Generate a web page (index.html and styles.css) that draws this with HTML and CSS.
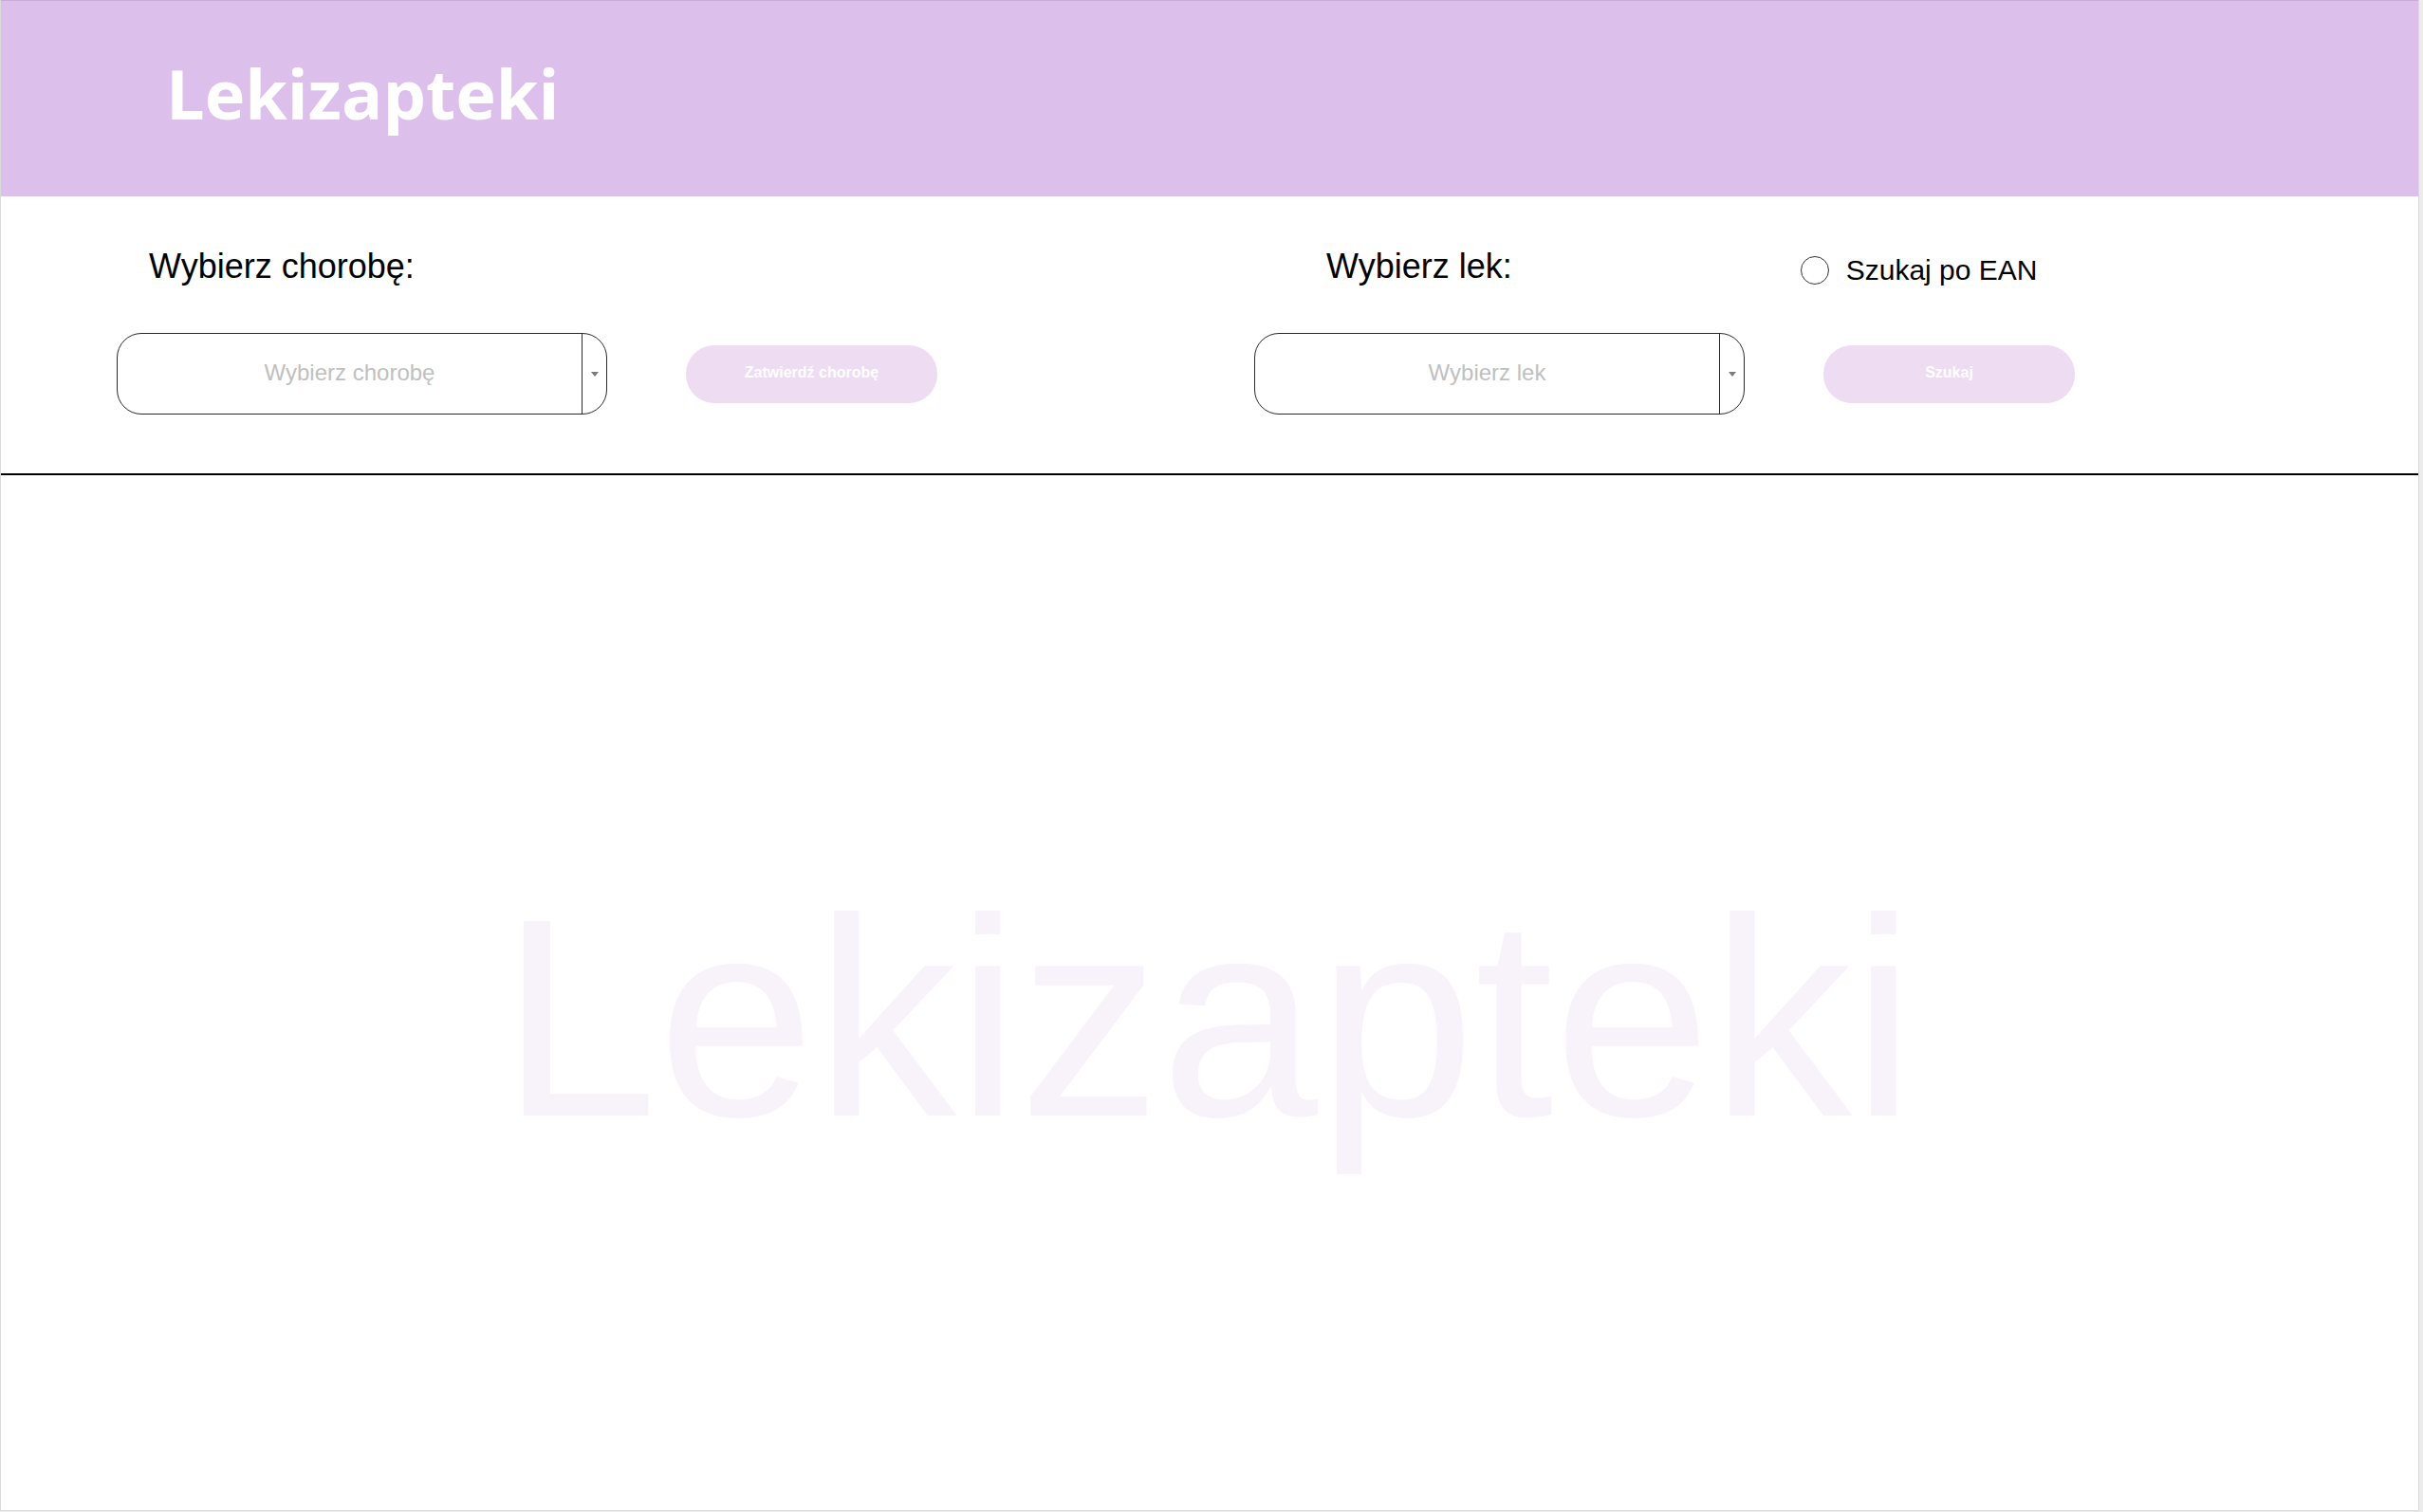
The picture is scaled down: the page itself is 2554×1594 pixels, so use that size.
FILE: index.html
```html
<!DOCTYPE html>
<html lang="pl">
<head>
<meta charset="utf-8">
<title>Lekizapteki</title>
<link rel="stylesheet" href="styles.css">
</head>
<body>
<div class="page">
  <header class="topbar">
    <h1 class="brand">Lekizapteki</h1>
  </header>
  <section class="controls">
    <div class="field">
      <div class="field-head">
        <label class="field-label field-label-left">Wybierz chorobę:</label>
      </div>
      <div class="field-body">
        <div class="select">
          <div class="select-value">Wybierz chorobę</div>
          <div class="select-arrow"><span class="caret"></span></div>
        </div>
        <button class="btn">Zatwierdź chorobę</button>
      </div>
    </div>
    <div class="field">
      <div class="field-head">
        <label class="field-label field-label-right">Wybierz lek:</label>
        <label class="radio">
          <span class="radio-circle"></span>
          <span class="radio-text">Szukaj po EAN</span>
        </label>
      </div>
      <div class="field-body">
        <div class="select">
          <div class="select-value">Wybierz lek</div>
          <div class="select-arrow"><span class="caret"></span></div>
        </div>
        <button class="btn">Szukaj</button>
      </div>
    </div>
  </section>
  <main class="content">
    <div class="watermark">Lekizapteki</div>
  </main>
</div>
</body>
</html>
```

FILE: styles.css
```css
html {
  background: #ececec;
}
body {
  margin: 0;
  font-family: "Liberation Sans", Arial, sans-serif;
}
.page {
  width: 2550px;
  height: 1593px;
  box-sizing: border-box;
  background: #ffffff;
  border-left: 1px solid #dadada;
  border-right: 1px solid #dadada;
  border-bottom: 1px solid #dadada;
  display: flex;
  flex-direction: column;
  overflow: hidden;
}
.topbar {
  height: 207px;
  box-sizing: border-box;
  margin: 0 -1px;
  background: #dcbfeb;
  border: 1px solid #c8abd9;
  border-bottom: none;
  padding: 48px 0 0 174px;
}
.brand {
  margin: 0;
  font-family: "Open Sans", sans-serif;
  font-weight: 700;
  font-size: 72px;
  line-height: normal;
  color: #ffffff;
}
.controls {
  height: 294px;
  box-sizing: border-box;
  border-bottom: 2px solid #000000;
  display: grid;
  grid-template-columns: 1199px 1fr;
  padding: 53px 0 0 122px;
}
.field {
  display: flex;
  flex-direction: column;
}
.field-head {
  height: 91px;
  display: flex;
  align-items: flex-start;
}
.field-label {
  font-size: 36px;
  line-height: normal;
  color: #000000;
}
.field-label-left {
  margin-left: 34px;
}
.field-label-right {
  margin-left: 76px;
}
.radio {
  margin-left: 304px;
  margin-top: 8px;
  display: flex;
  align-items: center;
  gap: 18px;
}
.radio-circle {
  width: 30px;
  height: 30px;
  box-sizing: border-box;
  border: 1px solid #333333;
  border-radius: 50%;
  background: #ffffff;
}
.radio-text {
  font-size: 30px;
  line-height: normal;
  color: #000000;
}
.field-body {
  display: flex;
  align-items: center;
  gap: 83px;
}
.select {
  width: 517px;
  height: 86px;
  box-sizing: border-box;
  border: 1px solid #2a2a2a;
  border-radius: 26px;
  display: flex;
  overflow: hidden;
  background: #ffffff;
}
.select-value {
  flex: 1;
  display: flex;
  align-items: center;
  justify-content: center;
  font-size: 24px;
  color: #c0c0c0;
  padding-bottom: 2px;
}
.select-arrow {
  width: 25px;
  border-left: 1px solid #2a2a2a;
  display: flex;
  align-items: center;
  justify-content: center;
}
.caret {
  width: 0;
  height: 0;
  border-left: 4px solid transparent;
  border-right: 4px solid transparent;
  border-top: 5px solid #7a7a7a;
}
.btn {
  width: 265px;
  height: 61px;
  border: none;
  border-radius: 30px;
  background: #eedcf3;
  color: #ffffff;
  font-family: "Liberation Sans", Arial, sans-serif;
  font-weight: 700;
  font-size: 16px;
  padding: 0 0 2px;
}
.content {
  flex: 1;
  padding-top: 400px;
  display: flex;
  justify-content: center;
  align-items: flex-start;
}
.watermark {
  font-size: 298px;
  line-height: normal;
  color: #f8f2fb;
  margin-left: -4px;
}
```
